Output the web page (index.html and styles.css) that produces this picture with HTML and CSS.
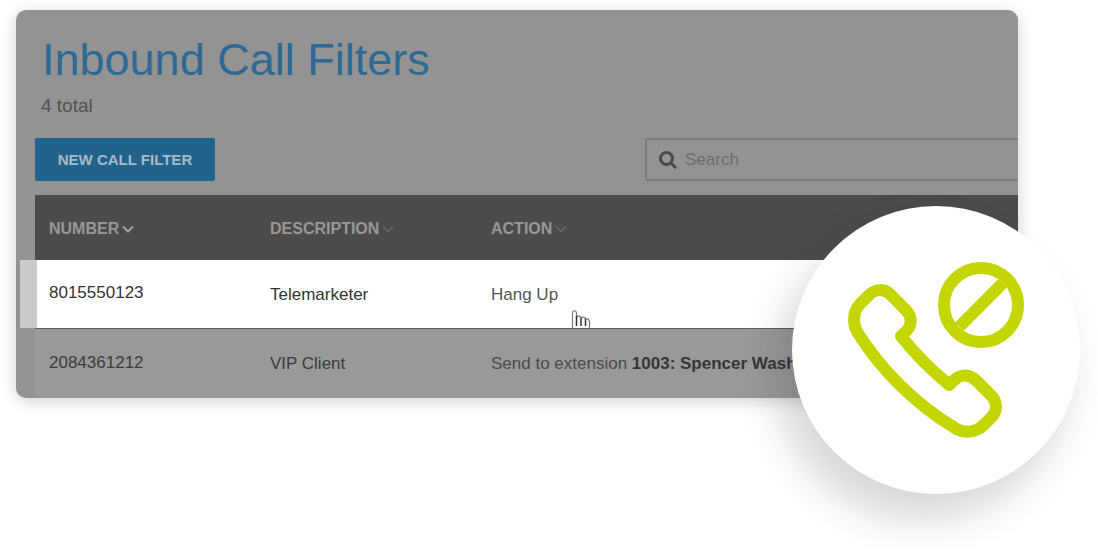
FILE: index.html
```html
<!DOCTYPE html>
<html lang="en">
<head>
<meta charset="UTF-8">
<meta name="viewport" content="width=device-width, initial-scale=1.0">
<title>Inbound Call Filters</title>
<link rel="stylesheet" href="styles.css">
</head>
<body>
    <div class="stage">
        <main class="card">
            <h1>Inbound Call Filters</h1>
            <p class="total">4 total</p>

            <div class="toolbar">
                <button type="button" class="new-filter">NEW CALL FILTER</button>
                <label class="search">
                    <svg class="search-icon" viewBox="0 0 18 18" aria-hidden="true">
                        <circle cx="7.5" cy="7.5" r="6" />
                        <path d="M12 12l5 5" />
                    </svg>
                    <input type="search" placeholder="Search" aria-label="Search">
                </label>
            </div>

            <table>
                <thead>
                    <tr>
                        <th class="col">NUMBER<svg class="sort active" viewBox="0 0 12 8"><path d="M1 1.5l5 5 5-5" /></svg></th>
                        <th class="col">DESCRIPTION<svg class="sort" viewBox="0 0 12 8"><path d="M1 1.5l5 5 5-5" /></svg></th>
                        <th>ACTION<svg class="sort" viewBox="0 0 12 8"><path d="M1 1.5l5 5 5-5" /></svg></th>
                    </tr>
                </thead>
                <tbody>
                    <tr class="highlight">
                        <td class="number">8015550123</td>
                        <td>Telemarketer</td>
                        <td class="action">Hang Up
                            <!-- hand cursor -->
                            <svg class="cursor" viewBox="0 0 20 18">
                                <path class="hand" d="M1.5 19V3C1.5 0 5.5 0 5.5 3V7C7 5.500 9.500 6 10 8C11.500 6.500 14 7 14.500 9C16.500 8 18.500 9.500 18.500 12V19" />
                                <path class="fingers" d="M5.500 6v10M10 8v8M14.500 9v7" />
                            </svg>
                        </td>
                    </tr>
                    <tr>
                        <td class="number">2084361212</td>
                        <td>VIP Client</td>
                        <td class="action">Send to extension <b>1003: Spencer Washington</b></td>
                    </tr>
                </tbody>
            </table>
        </main>

        <!-- blocked call badge -->
        <div class="badge">
            <svg viewBox="96 48 864 864" role="img" aria-label="Blocked call">
                <path d="M325 317L300 342C280 362 276 400 293 428C363 540 466 642 583 713C612 732 648 728 670 706L693 683C713 664 713 636 693 616L650 573C630 552 602 551 582 571L568 585C516 543 468 495 423 439L436 426C457 408 457 380 438 361L394 316C374 295 346 295 325 317Z" />
                <circle cx="663" cy="345" r="111" />
                <path d="M598 410L728 280" />
            </svg>
        </div>
    </div>
</body>
</html>
```

FILE: styles.css
```css
* {
    box-sizing: border-box;
}
body {
    margin: 0;
    background: #fff;
    font-family: "Liberation Sans", Arial, sans-serif;
}
.stage {
    position: relative;
    padding: 10px 80px 160px 16px;
}
.card {
    overflow: hidden;
    padding: 22px 0 0 19px;
    border-radius: 10px;
    background: #939393;
    box-shadow: 0 3px 16px rgba(0, 0, 0, 0.18);
}
h1 {
    margin: 0 0 0 7px;
    font-size: 45px;
    font-weight: normal;
    line-height: 56px;
    color: #2c6a95;
}
.total {
    margin: 7px 0 21px 6px;
    font-size: 19px;
    line-height: 22px;
    color: #525252;
}
.toolbar {
    display: flex;
    justify-content: space-between;
    margin: 0 -16px 14px 0;
}
.new-filter {
    width: 180px;
    height: 43px;
    border: none;
    border-radius: 2px;
    background: #20648d;
    color: #a9b9c4;
    font-family: inherit;
    font-size: 15px;
    font-weight: bold;
    cursor: pointer;
}
.search {
    display: flex;
    align-items: center;
    gap: 8px;
    width: 389px;
    height: 43px;
    padding: 0 12px;
    border: 2px solid #7c7c7c;
    border-radius: 3px;
}
.search-icon {
    width: 18px;
    height: 18px;
    fill: none;
    stroke: #494949;
    stroke-width: 3;
}
.search input {
    flex: 1;
    min-width: 0;
    padding: 0;
    border: none;
    outline: none;
    background: none;
    font-family: inherit;
    font-size: 17px;
}
.search input::placeholder {
    color: #6d6d6d;
}

/* filter table */
table {
    width: 100%;
    table-layout: fixed;
    border-collapse: collapse;
}
th,
td {
    padding: 0 0 0 14px;
    text-align: left;
    white-space: nowrap;
}
th {
    height: 65px;
    padding-top: 2px;
    background: #4d4b49;
    color: #989898;
    font-size: 16px;
}
.col {
    width: 221px;
}
.sort {
    width: 12px;
    height: 8px;
    margin-left: 3px;
    vertical-align: 1px;
    fill: none;
    stroke: #6b6a69;
    stroke-width: 1.5;
}
.sort.active {
    stroke: #a5a5a5;
    stroke-width: 2;
}
td {
    position: relative;
    height: 70px;
    padding-top: 2px;
    background: #999;
    color: #3b3b3b;
    font-size: 17px;
}
td.number {
    padding-top: 0;
    padding-bottom: 1px;
}
td.action {
    color: #4a4a4a;
}
td b {
    color: #363636;
}
.highlight td {
    height: 68px;
    background: #fff;
    color: #333;
}
.highlight td.action {
    color: #555;
}
.highlight + tr td {
    border-top: 1px solid #5c5c5c;
}
.highlight .number::before {
    content: "";
    position: absolute;
    top: 0;
    bottom: 0;
    left: -15px;
    width: 17px;
    background: #cacaca;
}
.cursor {
    position: absolute;
    bottom: 0;
    left: 94px;
    width: 20px;
    height: 18px;
    fill: none;
}
.hand {
    stroke: #777;
    stroke-width: 1.2;
}
.fingers {
    stroke: #333;
    stroke-width: 1.5;
}

/* round badge over the card corner */
.badge {
    position: absolute;
    top: 206px;
    right: 18px;
    width: 288px;
    height: 288px;
    border-radius: 50%;
    background: #fff;
    box-shadow: -14px 24px 40px rgba(45, 30, 40, 0.19);
}
.badge svg {
    display: block;
    fill: none;
    stroke: #c4d600;
    stroke-width: 36;
    stroke-linejoin: round;
}
```
